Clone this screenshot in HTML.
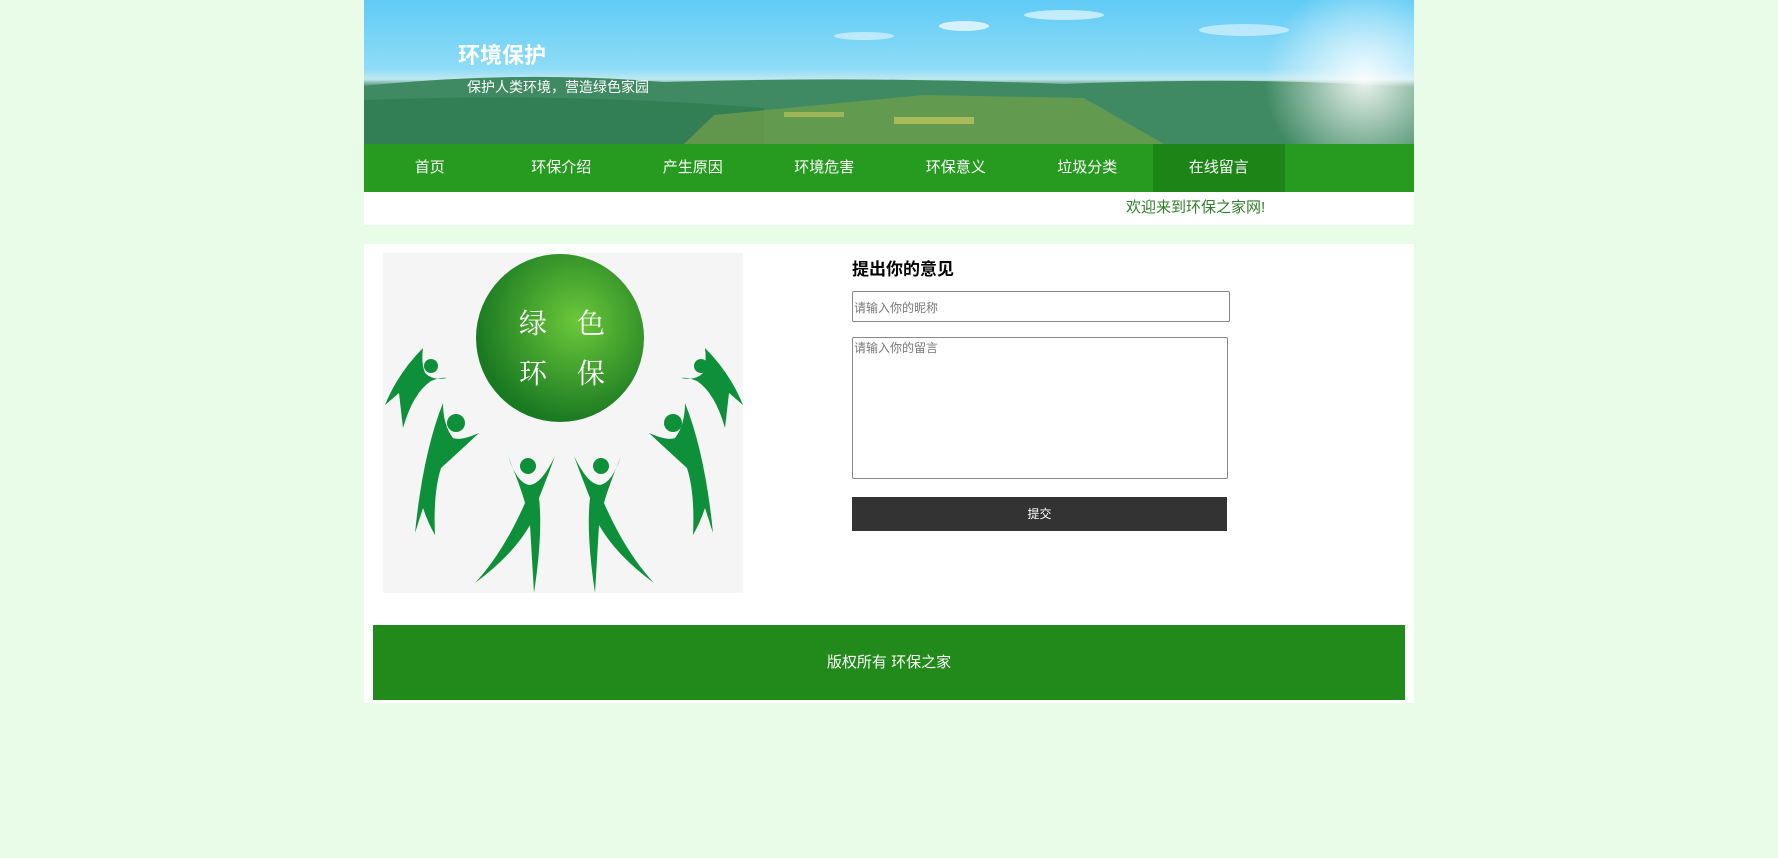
<!DOCTYPE html>
<html><head><meta charset="utf-8"><style>
*{margin:0;padding:0;box-sizing:border-box}
body{width:1778px;height:858px;background:#e8fce8;font-family:"Liberation Sans","Noto Sans CJK SC",sans-serif;position:relative;overflow:hidden}
.wrap{position:absolute;left:364px;top:0;width:1050px}
.banner{height:144px;position:relative;overflow:hidden;background:linear-gradient(180deg,#5fcbf5 0%,#8fdcf7 48%,#bfe8f0 55%,#4d8f70 60%,#4a8a5e 72%,#6a9e55 85%,#5a8a4a 100%)}
.banner h1{position:absolute;left:94px;top:38px;color:#fff;font-size:22px;font-weight:bold}
.banner p{position:absolute;left:103px;top:77px;color:#fff;font-size:14px}
.nav{height:48px;background:#279b1f;display:flex}
.nav a{width:131.5px;text-align:center;line-height:48px;color:#fff;font-size:15px;text-decoration:none}
.nav a.on{background:#1d8518}
.wel{height:33px;background:#fff;position:relative}
.wel span{position:absolute;left:762px;top:4px;color:#2f7f28;font-size:15px}
.main{position:absolute;top:244px;left:0;width:1050px;height:459px;background:#fff}
.logo{position:absolute;left:19px;top:9px;width:360px;height:340px;background:#f5f5f5}
h2{position:absolute;left:488px;top:11px;font-size:17px;font-weight:bold;color:#000}
.in{position:absolute;left:488px;top:47px;width:378px;height:31px;border:1px solid #888;border-radius:2px;font-size:12px;color:#777;padding:7px 1px}
.ta{position:absolute;left:488px;top:93px;width:376px;height:142px;border:1px solid #888;border-radius:2px;font-size:12px;color:#777;padding:1px}
.btn{position:absolute;left:488px;top:253px;width:375px;height:34px;background:#333;color:#fff;font-size:12px;text-align:center;line-height:34px}
.foot{position:absolute;left:9px;top:381px;width:1032px;height:75px;background:#218a1a;color:#fff;font-size:15px;text-align:center;line-height:75px}
</style></head><body>
<div class="wrap">
<div class="banner">
<svg width="1050" height="144" style="position:absolute;left:0;top:0">
<defs><radialGradient id="sun" cx="0.5" cy="0.5" r="0.5"><stop offset="0" stop-color="#fff" stop-opacity="0.9"/><stop offset="1" stop-color="#fff" stop-opacity="0"/></radialGradient></defs>
<ellipse cx="700" cy="15" rx="40" ry="5" fill="#fff" opacity="0.6"/>
<ellipse cx="600" cy="26" rx="25" ry="5" fill="#fff" opacity="0.7"/>
<ellipse cx="880" cy="30" rx="45" ry="6" fill="#fff" opacity="0.5"/>
<ellipse cx="500" cy="36" rx="30" ry="4" fill="#fff" opacity="0.5"/>
<path d="M0,86 Q150,70 300,82 Q500,76 700,84 Q900,76 1050,88 L1050,144 L0,144Z" fill="#3f8a63"/>
<path d="M0,100 Q200,92 400,108 L400,144 L0,144Z" fill="#2f7a50" opacity="0.7"/>
<path d="M350,115 L560,95 L720,98 L800,144 L320,144Z" fill="#6c9e4a" opacity="0.8"/>
<rect x="530" y="117" width="80" height="7" fill="#c8c860" opacity="0.7"/>
<rect x="420" y="112" width="60" height="5" fill="#c8c860" opacity="0.6"/>
<circle cx="1000" cy="80" r="100" fill="url(#sun)"/>
</svg>
<h1>环境保护</h1><p>保护人类环境，营造绿色家园</p>
</div>
<div class="nav"><a>首页</a><a>环保介绍</a><a>产生原因</a><a>环境危害</a><a>环保意义</a><a>垃圾分类</a><a class="on">在线留言</a></div>
<div class="wel"><span>欢迎来到环保之家网!</span></div>
<div class="main">
<div class="logo">
<svg width="360" height="340" viewBox="0 0 360 340">
<defs><radialGradient id="g" cx="0.6" cy="0.4" r="0.6"><stop offset="0" stop-color="#6cc83a"/><stop offset="1" stop-color="#1a7a22"/></radialGradient></defs>
<circle cx="177" cy="85" r="84" fill="url(#g)"/>
<text x="150" y="80" font-size="28" fill="#fff" text-anchor="middle" font-family="'Noto Serif CJK SC',serif">绿</text>
<text x="208" y="80" font-size="28" fill="#fff" text-anchor="middle" font-family="'Noto Serif CJK SC',serif">色</text>
<text x="150" y="130" font-size="28" fill="#fff" text-anchor="middle" font-family="'Noto Serif CJK SC',serif">环</text>
<text x="208" y="130" font-size="28" fill="#fff" text-anchor="middle" font-family="'Noto Serif CJK SC',serif">保</text>
<g fill="#0e8f3a">
<circle cx="145" cy="213" r="8"/><circle cx="218" cy="213" r="8"/>
<circle cx="73" cy="170" r="9"/><circle cx="290" cy="170" r="9"/>
<circle cx="48" cy="113" r="7"/><circle cx="318" cy="113" r="7"/>
<path d="M125,203 Q138,235 142,250 Q120,300 92,330 Q130,302 147,272 L151,340 Q160,280 156,245 Q164,225 172,203 Q158,232 146,232 Q134,230 125,203Z"/>
<path d="M238,203 Q225,235 221,250 Q243,300 271,330 Q233,302 216,272 L212,340 Q203,280 207,245 Q199,225 191,203 Q205,232 217,232 Q229,230 238,203Z"/>
<path d="M60,150 Q40,200 32,280 L40,255 Q45,270 52,282 Q50,240 58,215 Q80,195 96,180 Q78,188 70,185 Q60,172 60,150Z"/>
<path d="M302,150 Q322,200 330,280 L322,255 Q317,270 310,282 Q312,240 304,215 Q282,195 266,180 Q284,188 292,185 Q302,172 302,150Z"/>
<path d="M40,95 Q15,120 2,152 L16,140 L20,175 Q30,140 48,128 Q58,124 64,125 Q50,128 42,120 Q38,110 40,95Z"/>
<path d="M322,95 Q347,120 360,152 L346,140 L342,175 Q332,140 314,128 Q304,124 298,125 Q312,128 320,120 Q324,110 322,95Z"/>
</g>
</svg>
</div>
<h2>提出你的意见</h2>
<div class="in">请输入你的昵称</div>
<div class="ta">请输入你的留言</div>
<div class="btn">提交</div>
<div class="foot">版权所有 环保之家</div>
</div>
</div>
</body></html>
